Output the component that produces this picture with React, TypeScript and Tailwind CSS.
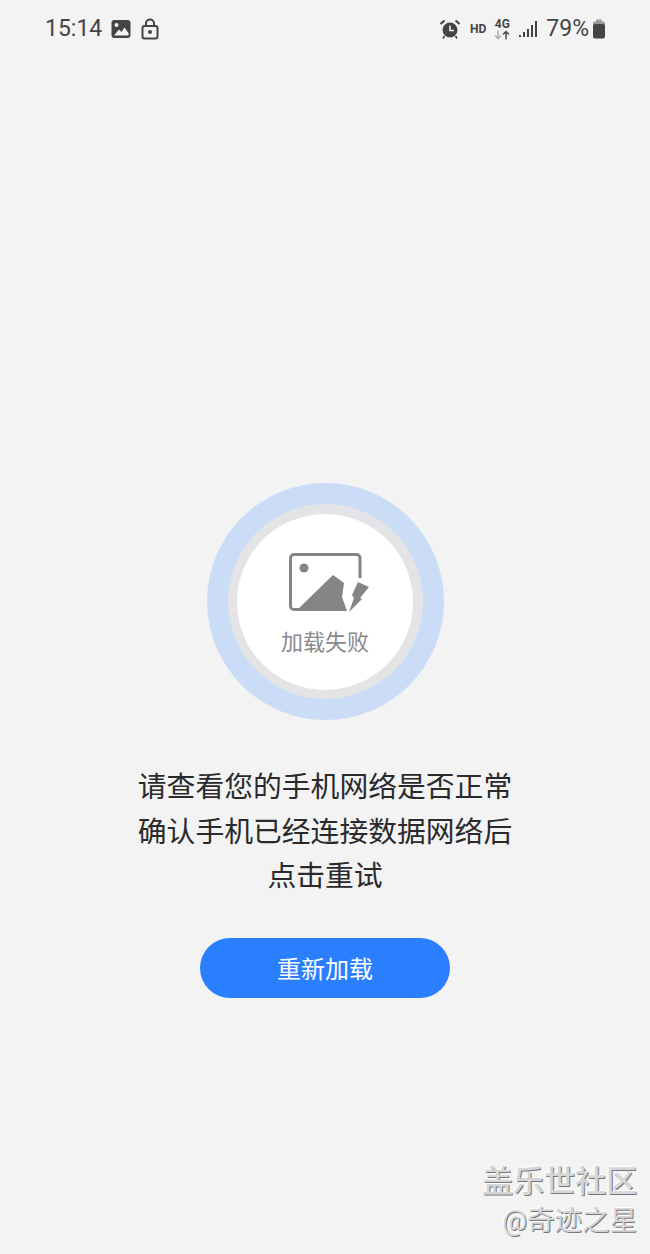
const cjk = "font-['Noto_Sans_CJK_SC','Noto_Sans',sans-serif]";

const StatusBar = () => (
  <div className="flex items-center justify-between pl-[45px] pr-[44px] pt-[2px] h-[56px] text-[#444446]">
    <div className="flex items-center">
      <span className="font-['Roboto',sans-serif] text-[23px] leading-[28px]">15:14</span>
      {/* picture */}
      <svg className="ml-[9px]" width="20" height="20" viewBox="0 0 20 20">
        <rect x="0.5" y="1" width="19" height="18" rx="3" fill="#444446" />
        <circle cx="5.5" cy="6" r="2" fill="#f3f3f3" />
        <path d="M3 16.5 L8 10.5 L10.5 13 L13.5 8.5 L17.5 14 L17.5 16.5 Z" fill="#f3f3f3" />
      </svg>
      {/* lock */}
      <svg className="ml-[10px]" width="18" height="22" viewBox="0 0 18 22" fill="none">
        <rect x="1.5" y="8" width="15" height="12.5" rx="2" stroke="#444446" strokeWidth="2" />
        <path d="M5 8 V5.5 a4 4 0 0 1 8 0 V8" stroke="#444446" strokeWidth="2" />
        <circle cx="9" cy="14" r="2" fill="#444446" />
      </svg>
    </div>
    <div className="flex items-center">
      {/* alarm */}
      <svg width="20" height="20" viewBox="0 0 20 20">
        <circle cx="10" cy="11" r="7.5" fill="#444446" />
        <path d="M4.5 1.5 L0.5 5 M15.5 1.5 L19.5 5" stroke="#444446" strokeWidth="2" />
        <path d="M4.5 17 L3 19.5 M15.5 17 L17 19.5" stroke="#444446" strokeWidth="1.6" />
        <path d="M10 6.5 V11.5 H14" stroke="#f3f3f3" strokeWidth="1.6" fill="none" />
      </svg>
      <span className="ml-[10px] font-['Roboto',sans-serif] font-bold text-[12px] leading-none">HD</span>
      <div className="ml-[8px] flex flex-col items-center w-[16px]">
        <span className="font-['Roboto',sans-serif] font-bold text-[12px] leading-[11px]">4G</span>
        <svg width="16" height="10" viewBox="0 0 16 10" fill="none">
          <path d="M4 0.5 V8.5 M1 5.5 L4 8.5 L7 5.5" stroke="#a9a9ab" strokeWidth="1.4" />
          <path d="M12 9.5 V1.5 M9 4.5 L12 1.5 L15 4.5" stroke="#444446" strokeWidth="1.4" />
        </svg>
      </div>
      {/* signal */}
      <svg className="ml-[9px]" width="19" height="18" viewBox="0 0 19 18" fill="#444446">
        <rect x="0" y="15" width="2" height="2" />
        <rect x="4" y="12" width="2" height="5" />
        <rect x="8" y="9" width="2" height="8" />
        <rect x="12" y="5" width="2" height="12" />
        <rect x="16" y="1" width="2" height="16" />
      </svg>
      <span className="ml-[8px] font-['Roboto',sans-serif] text-[23px] leading-[28px]">79%</span>
      {/* battery */}
      <svg className="ml-[3px]" width="14" height="20" viewBox="0 0 14 20">
        <rect x="4" y="0.5" width="6" height="3" rx="1" fill="#9a9a9c" />
        <rect x="1" y="2.5" width="12" height="4" rx="1.5" fill="#9a9a9c" />
        <rect x="1" y="5" width="12" height="14.5" rx="2" fill="#444446" />
      </svg>
    </div>
  </div>
);

const BrokenImage = () => (
  <svg width="90" height="66" viewBox="285 551 90 66" className="block ml-[10px]">
    <path
      d="M360 578 V558 a3.5 3.5 0 0 0 -3.5 -3.5 H294 a3.5 3.5 0 0 0 -3.5 3.5 V606 a3.5 3.5 0 0 0 3.5 3.5 H344"
      fill="none"
      stroke="#858487"
      strokeWidth="3"
    />
    <circle cx="304" cy="568" r="4.5" fill="#858487" />
    <path d="M296 611 L333 575 L344 583 L342 597 L347 611 Z" fill="#858487" />
    <path d="M358 582 L369 587 L360 598 L362 599 L349 612 L354 598 L352 595 Z" fill="#858487" />
  </svg>
);

export default function App() {
  return (
    <div className={`relative w-[650px] h-[1254px] overflow-hidden bg-[#f3f3f3] ${cjk}`}>
      <StatusBar />
      <div className="flex flex-col items-center pt-[427px]">
        <div className="w-[237px] h-[237px] rounded-full bg-[#cbdcf6] flex items-center justify-center">
          <div className="w-[195px] h-[195px] rounded-full bg-[#e4e4e6] flex items-center justify-center">
            <div className="w-[176px] h-[176px] rounded-full bg-white flex flex-col items-center pt-[37px]">
              <BrokenImage />
              <span className="mt-[8px] text-[22px] leading-[30px] text-[#8a898c]">加载失败</span>
            </div>
          </div>
        </div>
        <div className="mt-[43px] text-center text-[28.8px] leading-[44.5px] text-[#2a2a2c]">
          <p>请查看您的手机网络是否正常</p>
          <p>确认手机已经连接数据网络后</p>
          <p>点击重试</p>
        </div>
        <button className="mt-[41px] w-[250px] h-[60px] rounded-full bg-[#2a7fff] text-white text-[24px] pt-[1px]">
          重新加载
        </button>
      </div>
      {/* watermark */}
      <div className="absolute right-[13px] bottom-[16px] flex flex-col items-end text-[#d6d6d8] [text-shadow:1px_1px_0_#77777a,-1px_-1px_0_#ffffff]">
        <span className="text-[31px] leading-[40px] font-medium">盖乐世社区</span>
        <span className="mt-[2px] text-[27.5px] leading-[34px]">
          <span className="font-['Roboto',sans-serif]">@</span>奇迹之星
        </span>
      </div>
    </div>
  );
}
